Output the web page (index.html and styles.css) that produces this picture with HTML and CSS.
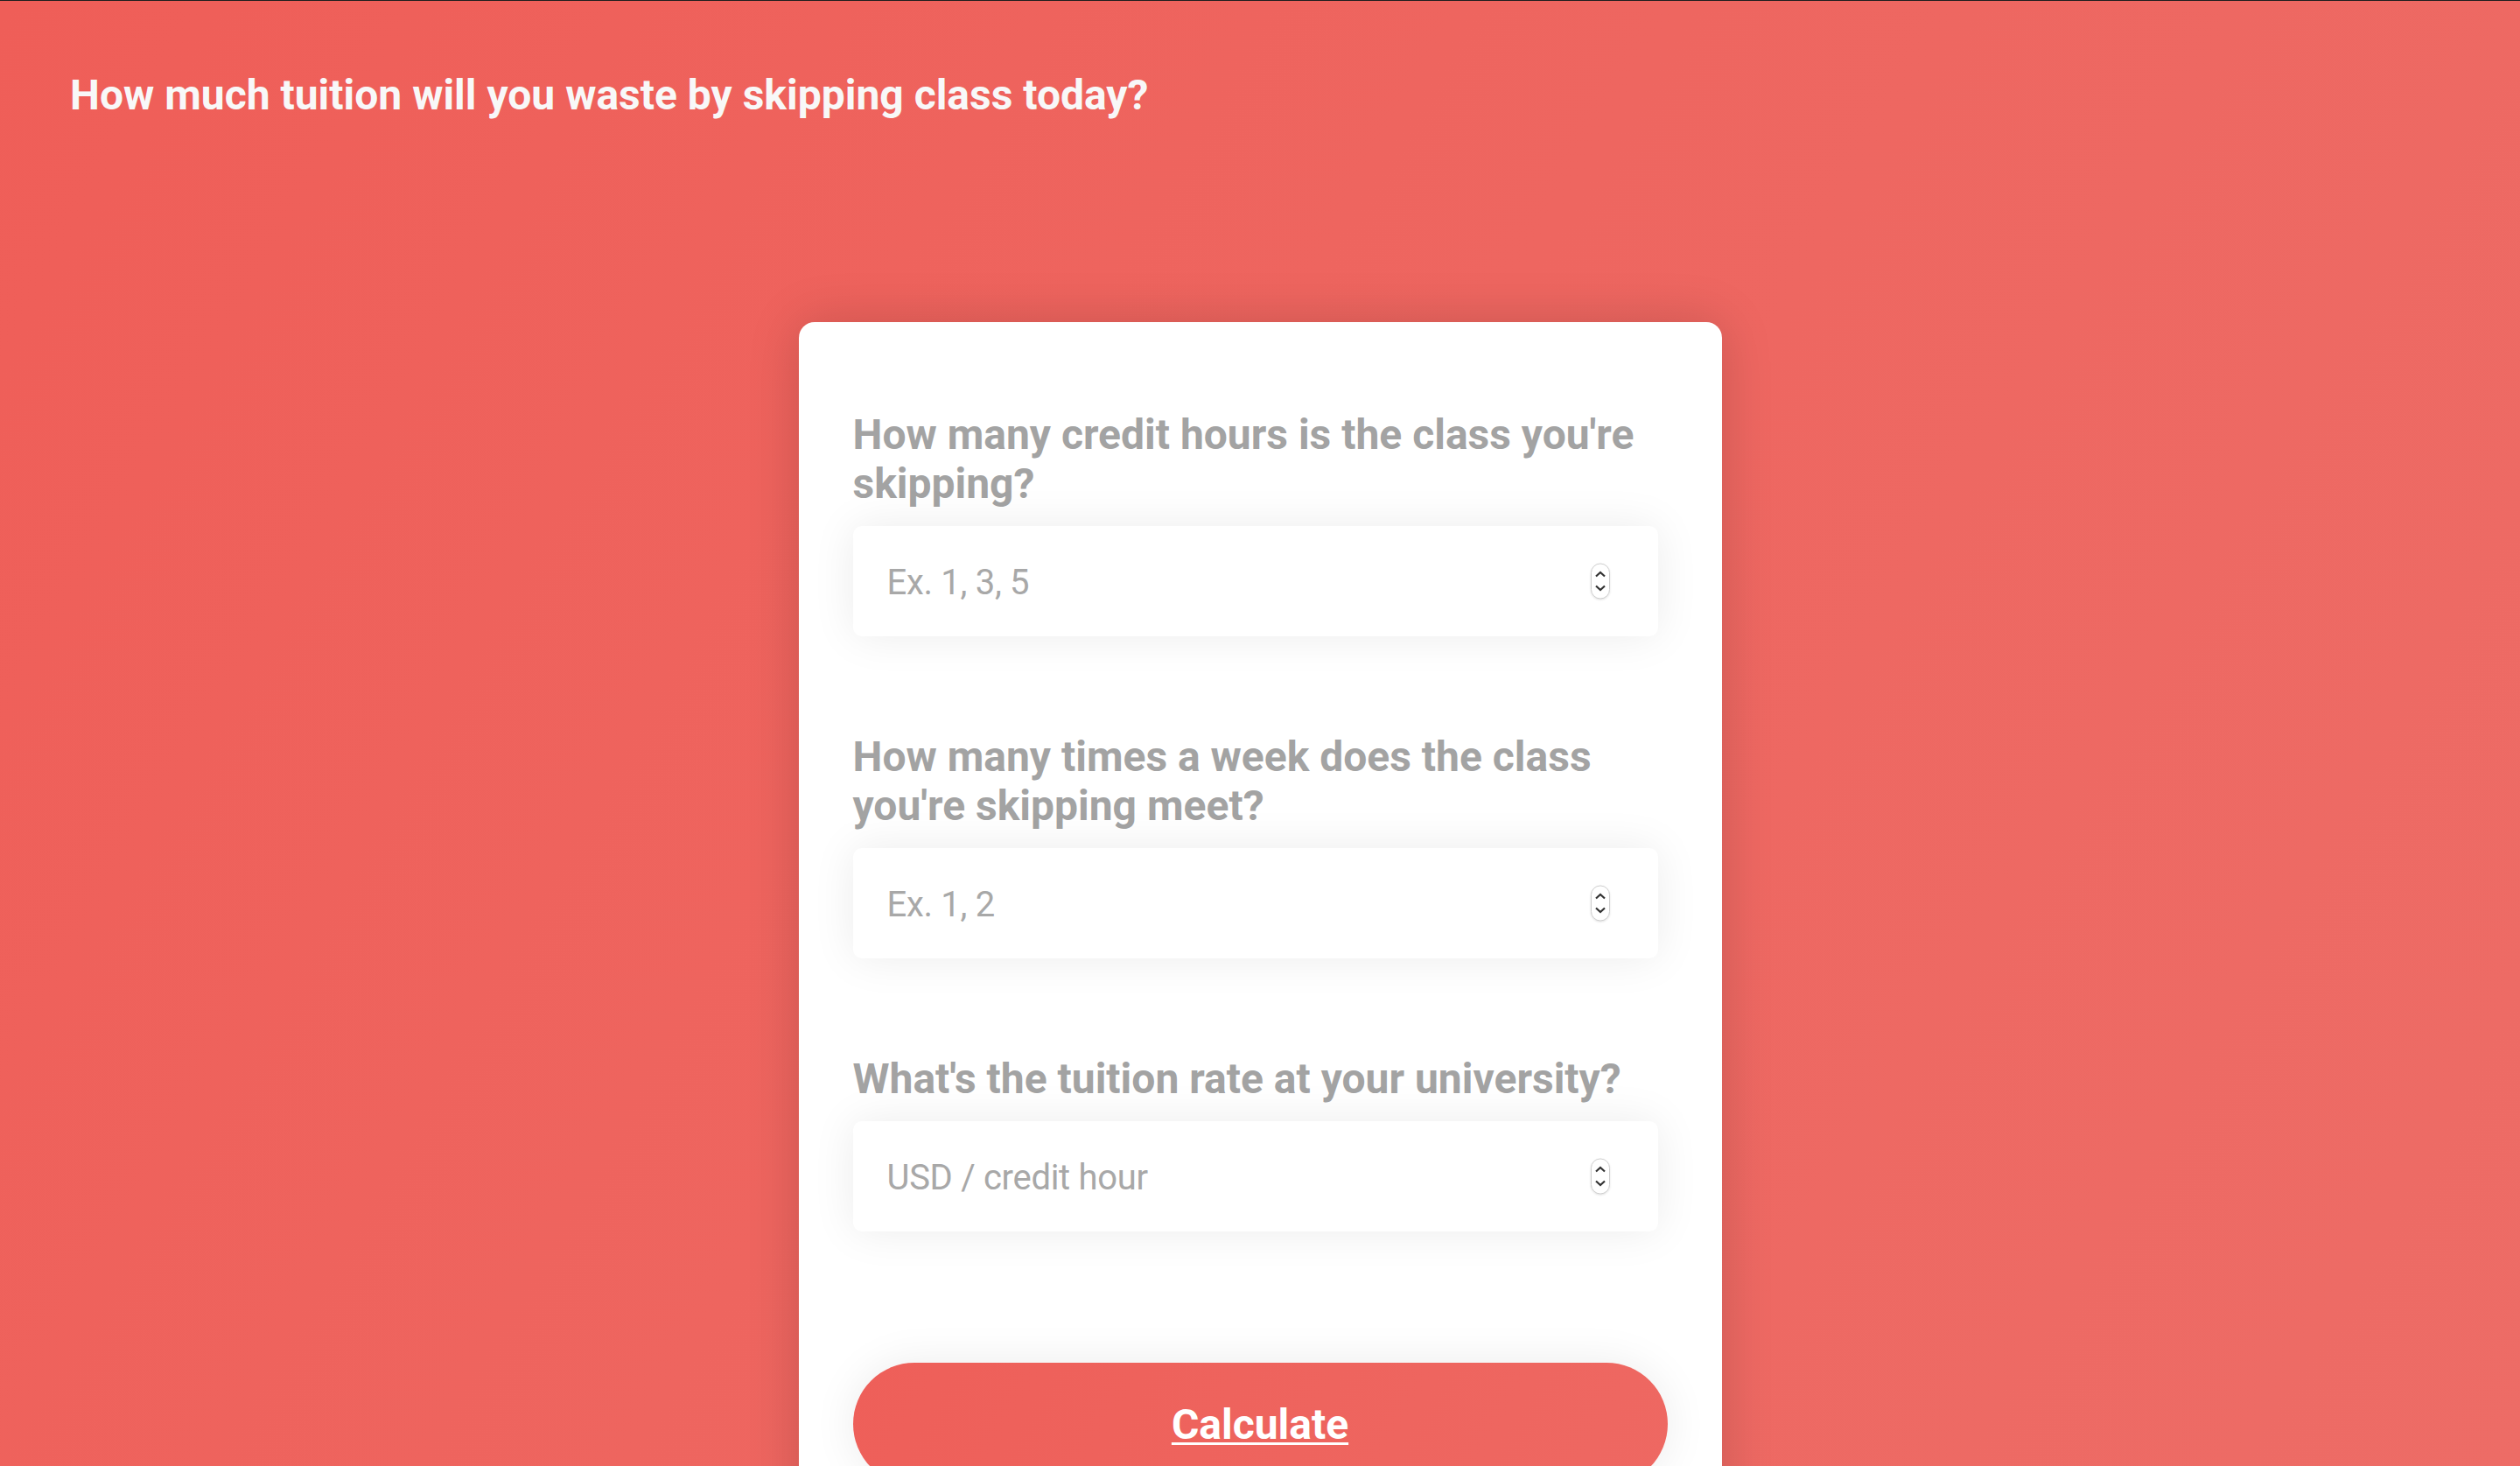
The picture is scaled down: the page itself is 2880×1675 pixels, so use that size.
FILE: index.html
```html
<!DOCTYPE html>
<html lang="en">
<head>
<meta charset="utf-8">
<title>Skip Class Calculator</title>
<link rel="stylesheet" href="styles.css">
</head>
<body>
<div class="page">
  <h1 class="title">How much tuition will you waste by skipping class today?</h1>
  <main class="card">
    <form class="form">
      <div class="group">
        <label class="label" for="credits">How many credit hours is the class you're skipping?</label>
        <div class="field">
          <input id="credits" class="input" type="text" placeholder="Ex. 1, 3, 5">
          <svg class="stepper" width="24" height="43" viewBox="0 0 24 43"><rect x="1.5" y="1" width="21" height="40" rx="10.5" fill="#fff" stroke="#cfcfcf" stroke-width="1"/><path d="M7 15.5 L12 11 L17 15.5" fill="none" stroke="#333" stroke-width="2.2"/><path d="M7 26.5 L12 31 L17 26.5" fill="none" stroke="#333" stroke-width="2.2"/></svg>
        </div>
      </div>
      <div class="group">
        <label class="label" for="meets">How many times a week does the class you're skipping meet?</label>
        <div class="field">
          <input id="meets" class="input" type="text" placeholder="Ex. 1, 2">
          <svg class="stepper" width="24" height="43" viewBox="0 0 24 43"><rect x="1.5" y="1" width="21" height="40" rx="10.5" fill="#fff" stroke="#cfcfcf" stroke-width="1"/><path d="M7 15.5 L12 11 L17 15.5" fill="none" stroke="#333" stroke-width="2.2"/><path d="M7 26.5 L12 31 L17 26.5" fill="none" stroke="#333" stroke-width="2.2"/></svg>
        </div>
      </div>
      <div class="group">
        <label class="label" for="rate">What's the tuition rate at your university?</label>
        <div class="field">
          <input id="rate" class="input" type="text" placeholder="USD / credit hour">
          <svg class="stepper" width="24" height="43" viewBox="0 0 24 43"><rect x="1.5" y="1" width="21" height="40" rx="10.5" fill="#fff" stroke="#cfcfcf" stroke-width="1"/><path d="M7 15.5 L12 11 L17 15.5" fill="none" stroke="#333" stroke-width="2.2"/><path d="M7 26.5 L12 31 L17 26.5" fill="none" stroke="#333" stroke-width="2.2"/></svg>
        </div>
      </div>
      <button class="button" type="button">Calculate</button>
    </form>
  </main>
</div>
</body>
</html>
```
FILE: styles.css
```css
html, body {
  margin: 0;
  padding: 0;
}
html {
  min-height: 100%;
  background: linear-gradient(120deg, #ef5e58 0%, #ee6660 50%, #ed6c66 100%) fixed;
}
body {
  font-family: Roboto, "Liberation Sans", sans-serif;
}
.page {
  border-top: 1px solid #1e1e1e;
  padding: 80px 80px 0 80px;
  display: flex;
  flex-direction: column;
  align-items: flex-start;
}
.title {
  margin: 0;
  font-size: 48px;
  font-weight: 700;
  line-height: 56px;
  color: #f8f8f8;
}
.card {
  align-self: center;
  margin-top: 231px;
  width: 1055px;
  box-sizing: border-box;
  padding: 101px 62px 120px 62px;
  background: #fff;
  border-radius: 18px;
  box-shadow: 0 0 60px rgba(0, 0, 0, 0.16);
}
.form {
  display: flex;
  flex-direction: column;
}
.group {
  display: flex;
  flex-direction: column;
  gap: 20px;
  margin-bottom: 110px;
}
.group:last-of-type {
  margin-bottom: 150px;
}
.label {
  font-size: 48px;
  font-weight: 700;
  line-height: 56px;
  color: #a3a3a3;
}
.field {
  width: 920px;
  height: 126px;
  box-sizing: border-box;
  padding: 2px 54px 0 39px;
  display: flex;
  align-items: center;
  background: #fff;
  border-radius: 10px;
  box-shadow: 0 0 50px rgba(0, 0, 0, 0.08);
}
.input {
  flex: 1;
  min-width: 0;
  border: 0;
  outline: 0;
  padding: 0;
  margin: 0;
  background: transparent;
  font-family: Roboto, "Liberation Sans", sans-serif;
  font-size: 40px;
  letter-spacing: -0.3px;
  color: #555;
}
.input::placeholder {
  color: #a8a8a8;
  opacity: 1;
}
.stepper {
  flex: none;
  margin-top: -2px;
  filter: drop-shadow(0 1px 1px rgba(0, 0, 0, 0.12));
}
.button {
  width: 100%;
  height: 140px;
  border: 0;
  border-radius: 70px;
  background: linear-gradient(120deg, #ee5f59 0%, #ee6862 100%);
  box-shadow: 0 0 50px rgba(0, 0, 0, 0.08);
  color: #fff;
  font-family: Roboto, "Liberation Sans", sans-serif;
  font-size: 48px;
  font-weight: 700;
  text-decoration: underline;
  text-decoration-thickness: 3px;
  text-underline-offset: 4px;
  cursor: pointer;
  padding: 0;
}
```
